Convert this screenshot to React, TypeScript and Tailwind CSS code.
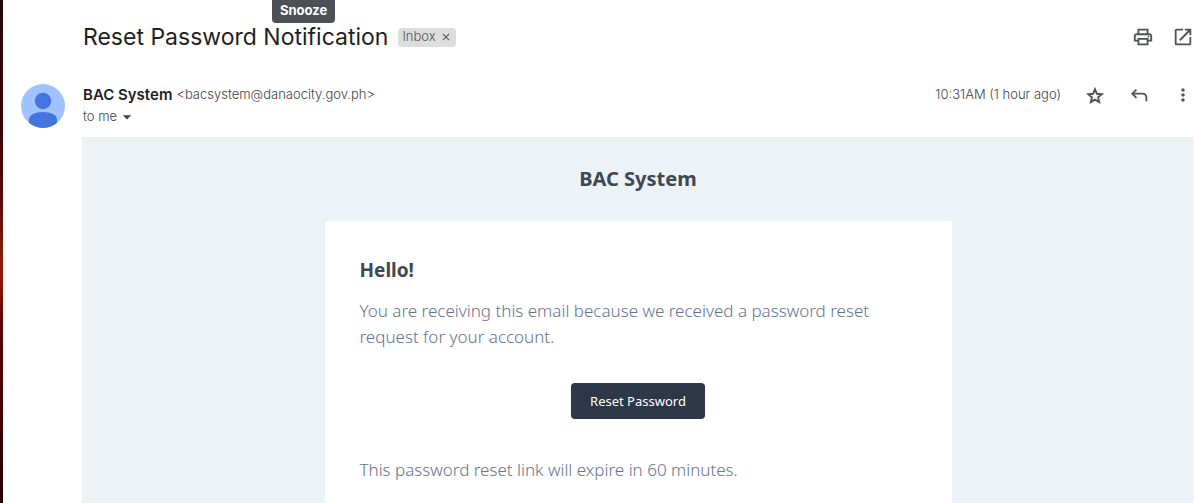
import type { ReactNode } from "react";
import {
  MdArrowDropDown,
  MdClose,
  MdMoreVert,
  MdOpenInNew,
  MdOutlinePrint,
} from "react-icons/md";

const IconButton = ({ label, children }: { label: string; children: ReactNode }) => {
  return (
    <button
      type="button"
      aria-label={label}
      className="flex size-5 items-center justify-center text-[#505352]"
    >
      {children}
    </button>
  );
};

const StarIcon = () => (
  <svg viewBox="0 0 20 20" className="size-5" fill="none" stroke="currentColor" strokeWidth="1.9">
    <path d="m10 4.300 1.900 4.500 4.900.400-3.700 3.200 1.100 4.700-4.200-2.500-4.200 2.500 1.100-4.700-3.700-3.200 4.900-.400z" />
  </svg>
);

const ReplyIcon = () => (
  <svg viewBox="0 0 20 20" className="size-5" fill="none" stroke="currentColor" strokeWidth="1.8">
    <path d="M7.400 4.600 3.300 8.700l4.100 4.100" />
    <path d="M3.300 8.700h9.900c2.600 0 4.200 1.600 4.200 4.200V16.300" />
  </svg>
);

const Avatar = () => (
  <svg viewBox="0 0 44 44" className="size-11 shrink-0">
    <defs>
      <clipPath id="avatar-clip">
        <circle cx="22" cy="22" r="22" />
      </clipPath>
    </defs>
    <g clipPath="url(#avatar-clip)">
      <rect width="44" height="44" fill="#a0c3ff" />
      <circle cx="22" cy="17" r="8.2" fill="#4374e0" />
      <path d="M8 44v-8.500c0-4.500 6-7.500 14-7.500s14 3 14 7.500V44z" fill="#4374e0" />
    </g>
  </svg>
);

const SubjectBar = () => {
  return (
    <header className="flex h-6 items-center justify-between">
      <div className="flex items-center gap-[10px]">
        <h1 className="text-[23px] leading-6 text-[#1f1f1f]">Reset Password Notification</h1>
        <span className="flex h-[19px] items-center gap-1 rounded bg-[#ddd] px-1 text-[13px] font-light text-[#555]">
          Inbox
          <button type="button" aria-label="Remove label Inbox">
            <MdClose className="size-3" />
          </button>
        </span>
      </div>
      <div className="flex gap-5">
        <IconButton label="Print all">
          <MdOutlinePrint className="size-[22px] shrink-0" />
        </IconButton>
        <IconButton label="In new window">
          <MdOpenInNew className="size-[22px] shrink-0" />
        </IconButton>
      </div>
    </header>
  );
};

const SenderBar = () => {
  return (
    <div className="flex gap-[18px]">
      <Avatar />
      <div className="flex-1 text-[13px] font-light text-[#444]">
        <div className="flex h-[22px] items-center justify-between">
          <p className="flex items-center gap-1">
            <span className="text-[15px] font-semibold text-[#1f1f1f]">BAC System</span>
            <span>&lt;bacsystem@danaocity.gov.ph&gt;</span>
          </p>
          <div className="flex items-center gap-6">
            <span>10:31AM (1 hour ago)</span>
            <IconButton label="Not starred">
              <StarIcon />
            </IconButton>
            <IconButton label="Reply">
              <ReplyIcon />
            </IconButton>
            <IconButton label="More">
              <MdMoreVert className="size-5" />
            </IconButton>
          </div>
        </div>
        <button type="button" className="flex h-[22px] items-center">
          to me
          <MdArrowDropDown className="size-5" />
        </button>
      </div>
    </div>
  );
};

const EmailBody = () => {
  return (
    <section className="flex flex-1 flex-col items-center bg-[#edf2f7] font-['Noto_Sans','Open_Sans',sans-serif]">
      <a href="#" className="py-7 text-xl leading-7 font-bold text-[#3d4852]">
        BAC System
      </a>
      <div className="w-full max-w-[627px] flex-1 rounded-xs bg-white px-[35px] pt-[35px] text-[17px] leading-[26px] font-light text-[#64748f]">
        <h2 className="text-[19px] leading-7 font-bold text-[#3d4852]">Hello!</h2>
        <p className="mt-[14px]">
          You are receiving this email because we received a password reset request for your
          account.
        </p>
        <div className="mt-[33px] mb-[38px] flex justify-center">
          <a
            href="#"
            className="rounded bg-[#2d3748] px-[19px] py-2 text-[13px] leading-5 font-normal text-white"
          >
            Reset Password
          </a>
        </div>
        <p>This password reset link will expire in 60 minutes.</p>
      </div>
    </section>
  );
};

const App = () => {
  return (
    <div className="relative flex min-h-screen bg-white font-['Inter',sans-serif]">
      <div className="w-[3px] shrink-0 bg-[linear-gradient(#250808_0%,#3a0606_25%,#5c0a08_40%,#8c1c0c_52%,#8c1608_57%,#5a0000_65%,#400000_82%,#240000_100%)]" />
      <main className="flex flex-1 flex-col pr-[5px]">
        <div className="pt-[25px] pr-px pl-20">
          <SubjectBar />
        </div>
        <div className="pt-[35px] pr-px pb-[9px] pl-[18px]">
          <SenderBar />
        </div>
        <div className="flex flex-1 flex-col pl-[79px]">
          <EmailBody />
        </div>
      </main>
      <div
        role="tooltip"
        className="absolute top-0 left-[272px] h-[23px] rounded-b bg-[#4d5156] px-2 text-[13px] leading-5 font-bold text-white"
      >
        Snooze
      </div>
    </div>
  );
};

export default App;
